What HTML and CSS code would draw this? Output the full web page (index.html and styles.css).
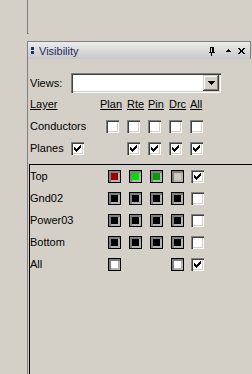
FILE: index.html
```html
<!DOCTYPE html>
<html lang="en">
<head>
    <meta charset="UTF-8">
    <title>Visibility</title>
    <link rel="stylesheet" href="styles.css">
</head>
<body>

    <div class="edge-above"></div>

    <div class="panel">
        <div class="titlebar">
            <span class="grip"><i></i><i></i></span>
            <span class="title">Visibility</span>
            <span class="tb-buttons">
                <svg class="pin" width="6" height="9" viewBox="0 0 6 9"><path d="M1 0h4v5h-4zM2 1v4h1v-4zM0 5h6v1h-6zM2 6h1v3h-1z" fill="#000" fill-rule="evenodd"/></svg>
                <svg class="up" width="5" height="3" viewBox="0 0 5 3"><path d="M2 0h1v1h1v1h1v1h-5v-1h1v-1h1z" fill="#000"/></svg>
                <svg class="close" width="7" height="6" viewBox="0 0 7 6"><path d="M0 0h2v1h1v1h1v-1h1v-1h2v1h-1v1h-1v2h1v1h1v1h-2v-1h-1v-1h-1v1h-1v1h-2v-1h1v-1h1v-2h-1v-1h-1z" fill="#000"/></svg>
            </span>
        </div>

        <div class="settings">
            <div class="views-row">
                <span class="views-label">Views:</span>
                <div class="combo">
                    <span class="combo-btn">
                        <svg width="7" height="4" viewBox="0 0 7 4"><path d="M0 0h7v1h-1v1h-1v1h-1v1h-1v-1h-1v-1h-1v-1h-1z" fill="#000"/></svg>
                    </span>
                </div>
            </div>

            <div class="opt-row">
                <span class="u">Layer</span>
                <span class="u col-plan">Plan</span>
                <span class="u">Rte</span>
                <span class="u">Pin</span>
                <span class="u">Drc</span>
                <span class="u">All</span>
            </div>
            <div class="opt-row">
                <span>Conductors</span>
                <span class="check col-plan-box"></span>
                <span class="check"></span>
                <span class="check"></span>
                <span class="check"></span>
                <span class="check"></span>
            </div>
            <div class="opt-row">
                <span class="planes"><span class="planes-name">Planes</span><span class="check on"><svg class="tick" viewBox="0 0 7 7"><path d="M0 2h1v1h1v1h1v-1h1v-1h1v-1h1v-1h1v3h-1v1h-1v1h-1v1h-1v1h-1v-1h-1v-1h-1z"/></svg></span></span>
                <span></span>
                <span class="check on"><svg class="tick" viewBox="0 0 7 7"><path d="M0 2h1v1h1v1h1v-1h1v-1h1v-1h1v-1h1v3h-1v1h-1v1h-1v1h-1v1h-1v-1h-1v-1h-1z"/></svg></span>
                <span class="check on"><svg class="tick" viewBox="0 0 7 7"><path d="M0 2h1v1h1v1h1v-1h1v-1h1v-1h1v-1h1v3h-1v1h-1v1h-1v1h-1v1h-1v-1h-1v-1h-1z"/></svg></span>
                <span class="check on"><svg class="tick" viewBox="0 0 7 7"><path d="M0 2h1v1h1v1h1v-1h1v-1h1v-1h1v-1h1v3h-1v1h-1v1h-1v1h-1v1h-1v-1h-1v-1h-1z"/></svg></span>
                <span class="check on"><svg class="tick" viewBox="0 0 7 7"><path d="M0 2h1v1h1v1h1v-1h1v-1h1v-1h1v-1h1v3h-1v1h-1v1h-1v1h-1v1h-1v-1h-1v-1h-1z"/></svg></span>
            </div>
        </div>

        <div class="layers">
            <div class="layer-row">
                <span>Top</span>
                <span class="swatch red"></span>
                <span class="swatch green"></span>
                <span class="swatch dkgreen"></span>
                <span class="swatch tan"></span>
                <span class="check on"><svg class="tick" viewBox="0 0 7 7"><path d="M0 2h1v1h1v1h1v-1h1v-1h1v-1h1v-1h1v3h-1v1h-1v1h-1v1h-1v1h-1v-1h-1v-1h-1z"/></svg></span>
            </div>
            <div class="layer-row">
                <span>Gnd02</span>
                <span class="swatch black"></span>
                <span class="swatch black"></span>
                <span class="swatch black"></span>
                <span class="swatch black"></span>
                <span class="check"></span>
            </div>
            <div class="layer-row">
                <span>Power03</span>
                <span class="swatch black"></span>
                <span class="swatch black"></span>
                <span class="swatch black"></span>
                <span class="swatch black"></span>
                <span class="check"></span>
            </div>
            <div class="layer-row">
                <span>Bottom</span>
                <span class="swatch black"></span>
                <span class="swatch black"></span>
                <span class="swatch black"></span>
                <span class="swatch black"></span>
                <span class="check"></span>
            </div>
            <div class="layer-row">
                <span>All</span>
                <span class="swatch white"></span>
                <span></span>
                <span></span>
                <span class="swatch white"></span>
                <span class="check on"><svg class="tick" viewBox="0 0 7 7"><path d="M0 2h1v1h1v1h1v-1h1v-1h1v-1h1v-1h1v3h-1v1h-1v1h-1v1h-1v1h-1v-1h-1v-1h-1z"/></svg></span>
            </div>
        </div>
    </div>

</body>
</html>
```

FILE: styles.css
```css
html, body {
    margin: 0;
    padding: 0;
    width: 252px;
    height: 374px;
    overflow: hidden;
    background-color: #d4d0c8;
    font-family: 'Liberation Sans', Arial, sans-serif;
    font-size: 11px;
    color: #000;
}

/* edge of the window above the panel */
.edge-above {
    margin-left: 27px;
    width: 1px;
    height: 33px;
    border-left: 1px solid #808080;
    border-bottom: 1px solid #808080;
    margin-bottom: 7px;
}

.panel {
    margin-left: 27px;
    height: 333px;
    border-left: 1px solid #808080;
    display: flex;
    flex-direction: column;
}

.titlebar {
    height: 17px;
    margin-right: 1px;
    border-top: 1px solid #808080;
    border-right: 1px solid #808080;
    background: linear-gradient(#ececec, #c8c8c8);
    display: flex;
    align-items: center;
    padding-left: 3px;
}

.grip {
    display: flex;
    flex-direction: column;
    gap: 1px;
    margin-top: -1px;
}

.grip i {
    display: block;
    width: 3px;
    height: 3px;
    background-color: #1c3270;
}

.title {
    margin-left: 5px;
    color: #1e2d5c;
    font-size: 11px;
}

.tb-buttons {
    margin-left: auto;
    display: flex;
    align-items: center;
    margin-right: 5px;
}

.pin {
    margin-right: 11px;
    margin-top: 2px;
}

.up {
    margin-right: 7px;
    margin-top: -1px;
}

.settings {
    padding: 14px 0 0 2px;
}

.views-row {
    display: flex;
    align-items: center;
    height: 20px;
}

.views-label {
    width: 41px;
}

.combo {
    width: 146px;
    height: 16px;
    padding: 2px;
    background-color: #fff;
    box-shadow: inset 1px 1px #808080, inset 2px 2px #404040, inset -1px -1px #fff, inset -2px -2px #d4d0c8;
    display: flex;
    justify-content: flex-end;
}

.combo-btn {
    width: 16px;
    height: 16px;
    background-color: #d4d0c8;
    box-shadow: inset -1px -1px #404040, inset 1px 1px #d4d0c8, inset -2px -2px #808080, inset 2px 2px #fff;
    display: flex;
    align-items: center;
    justify-content: center;
}

.opt-row {
    display: grid;
    grid-template-columns: 70px 27px 21px 21px 21px 21px;
    align-items: center;
    height: 22px;
}

.opt-row:first-of-type {
    margin-top: 1px;
}

.u {
    text-decoration: underline;
}

.col-plan-box {
    justify-self: end;
    margin-right: 8px;
}

.planes {
    display: flex;
    align-items: center;
}

.planes-name {
    width: 41px;
}

.check {
    position: relative;
    display: block;
    width: 13px;
    height: 13px;
    box-sizing: border-box;
    background-color: #fff;
    box-shadow: inset 1px 1px #808080, inset 2px 2px #404040, inset -1px -1px #fff, inset -2px -2px #d4d0c8;
}

.tick {
    position: absolute;
    left: 3px;
    top: 3px;
    width: 7px;
    height: 7px;
    fill: #000;
    shape-rendering: crispEdges;
}

.layers {
    flex: 1;
    margin-top: 5px;
    margin-left: 1px;
    border-top: 1px solid #000;
    border-left: 1px solid #000;
}

.layer-row {
    display: grid;
    grid-template-columns: 78px 21px 21px 21px 20px 13px;
    align-items: center;
    height: 22px;
}

.swatch {
    display: block;
    width: 13px;
    height: 13px;
    box-sizing: border-box;
    border: 1px solid #000;
    box-shadow: inset 2px 2px #808080, inset -2px -2px #b4b4b4;
}

.red { background-color: #a00000; }
.green { background-color: #00e000; }
.dkgreen { background-color: #00a000; }
.tan { background-color: #d4c8b8; }
.black { background-color: #000; }
.white { background-color: #fff; }
```
